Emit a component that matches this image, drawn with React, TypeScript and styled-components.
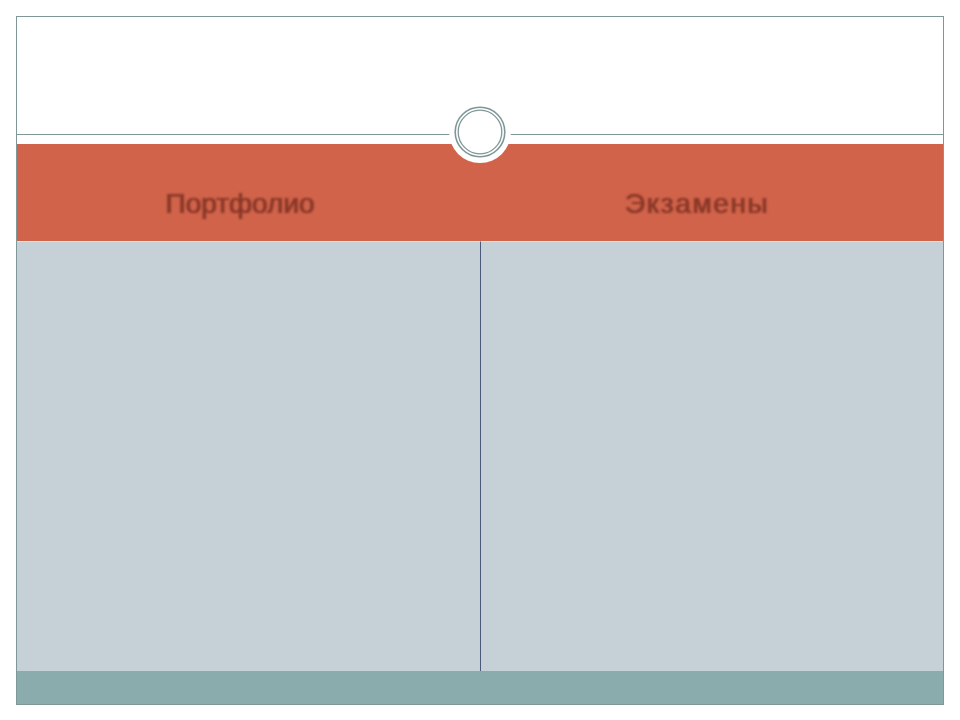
import styled, { createGlobalStyle } from "styled-components";

const Global = createGlobalStyle`
  html, body {
    margin: 0;
    padding: 0;
    background: #ffffff;
  }
`;

const Slide = styled.div`
  position: relative;
  box-sizing: border-box;
  margin: 16px 0 0 16px;
  width: 928px;
  height: 689px;
  border: 1px solid #7f9797;
  display: flex;
  flex-direction: column;
  background: #ffffff;
`;

const TitleArea = styled.div`
  height: 117px;
`;

const Rule = styled.div`
  height: 1px;
  background: #7f9797;
  margin-bottom: 9px;
`;

const Table = styled.div`
  display: grid;
  grid-template-columns: 464px 1fr;
  grid-template-rows: 97px 430px;
`;

const HeadCell = styled.div<{ $shift: number }>`
  background: #d0634a;
  display: flex;
  align-items: center;
  justify-content: center;
  padding-right: ${(p) => p.$shift}px;
  font-family: "Liberation Sans", Arial, sans-serif;
  font-weight: normal;
  font-size: 28px;
  color: #8a3829;
  padding-top: 22px;
  box-sizing: border-box;
`;

const Label = styled.span<{ $spacing?: number }>`
  letter-spacing: ${(p) => p.$spacing ?? 0}px;
  filter: blur(1.3px);
  text-shadow: 0.6px 0 0 #8a3829, -0.4px 0 0 #8a3829;
`;

const BodyCell = styled.div<{ $divider?: boolean }>`
  background: #c6d0d7;
  border-top: 1px solid #d8e6dc;
  border-right: ${(p) => (p.$divider ? "1px solid #4a5a7c" : "none")};
`;

const Footer = styled.div`
  flex: 1;
  background: #8aacac;
`;

const Medallion = styled.svg`
  position: absolute;
  left: 431px;
  top: 83px;
`;

export default function App() {
  return (
    <>
      <Global />
      <Slide>
        <TitleArea />
        <Rule />
        <Table>
          <HeadCell $shift={18}>
            <Label>Портфолио</Label>
          </HeadCell>
          <HeadCell $shift={30}>
            <Label $spacing={1.6}>Экзамены</Label>
          </HeadCell>
          <BodyCell $divider />
          <BodyCell />
        </Table>
        <Footer />
        <Medallion width="64" height="64" viewBox="0 0 64 64">
          <circle cx="32" cy="32" r="31" fill="#ffffff" />
          <circle cx="32" cy="32" r="24.8" fill="none" stroke="#7f9797" strokeWidth="1.6" />
          <circle cx="32" cy="32" r="21.8" fill="none" stroke="#7f9797" strokeWidth="1.3" />
        </Medallion>
      </Slide>
    </>
  );
}
